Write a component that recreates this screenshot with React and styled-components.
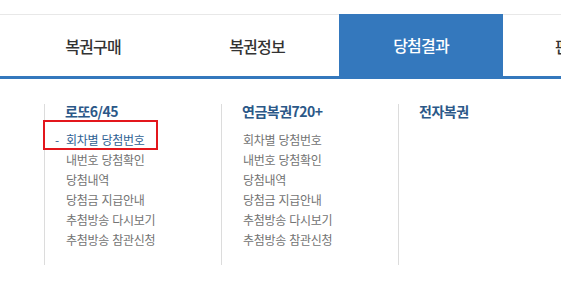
import React from "react";
import styled, { createGlobalStyle } from "styled-components";

const Global = createGlobalStyle`
  html, body { margin: 0; padding: 0; background: #fff; }
  body { font-family: "Noto Sans CJK KR", "Noto Sans", sans-serif; }
  ul { margin: 0; padding: 0; list-style: none; }
`;

const Page = styled.div`
  width: 561px;
  height: 284px;
  overflow: hidden;
  padding-top: 14px;
  box-sizing: border-box;
`;

const Nav = styled.nav`
  display: flex;
  height: 65px;
  border-top: 1px solid #e8e8e8;
  border-bottom: 3px solid #3478bd;
  padding-left: 11px;
  box-sizing: border-box;
`;

const Tab = styled.div`
  flex: 0 0 ${(p) => p.$w || 164}px;
  display: flex;
  align-items: center;
  justify-content: center;
  font-size: 16px;
  letter-spacing: -0.8px;
  font-weight: 500;
  color: ${(p) => (p.$active ? "#fff" : "#333")};
  background: ${(p) => (p.$active ? "#3478bd" : "transparent")};
  margin-top: ${(p) => (p.$active ? "-1px" : "0")};
  white-space: nowrap;
`;

const Sub = styled.div`
  display: flex;
  padding: 25px 0 0 44px;
`;

const Column = styled.div`
  flex: 0 0 177px;
  box-sizing: border-box;
  border-left: 1px solid #dcdcdc;
  padding: 0 0 15px 20px;
`;

const Heading = styled.h3`
  margin: 0 0 12px;
  font-size: 14px;
  line-height: 14px;
  font-weight: 700;
  letter-spacing: -0.5px;
  color: #2b5888;
`;

const List = styled.ul`
  min-height: 120px;
`;

const Item = styled.li`
  position: relative;
  font-size: 12px;
  line-height: 20px;
  letter-spacing: -0.3px;
  word-spacing: 1px;
  padding-left: 1px;
  white-space: nowrap;
  color: ${(p) => (p.$active ? "#2f6193" : "#737373")};
  &::before {
    content: ${(p) => (p.$active ? '"-"' : "none")};
    position: absolute;
    left: -10px;
    top: 0;
  }
`;

const Highlight = styled.span`
  position: absolute;
  left: -22px;
  top: -10px;
  width: 115px;
  height: 30px;
  box-sizing: border-box;
  border: 2px solid #e3161c;
  pointer-events: none;
`;

const items = [
  "회차별 당첨번호",
  "내번호 당첨확인",
  "당첨내역",
  "당첨금 지급안내",
  "추첨방송 다시보기",
  "추첨방송 참관신청",
];

const columns = [
  { title: "로또6/45", items, active: 0 },
  { title: "연금복권720+", items, active: -1 },
  { title: "전자복권", items: [], active: -1 },
];

export default function App() {
  return (
    <Page>
      <Global />
      <Nav>
        <Tab>복권구매</Tab>
        <Tab>복권정보</Tab>
        <Tab $active>당첨결과</Tab>
        <Tab $w={146}>판매점</Tab>
      </Nav>
      <Sub>
        {columns.map((c) => (
          <Column key={c.title}>
            <Heading>{c.title}</Heading>
            <List>
              {c.items.map((it, i) => (
                <Item key={it} $active={i === c.active}>
                  {it}
                  {i === c.active && <Highlight />}
                </Item>
              ))}
            </List>
          </Column>
        ))}
      </Sub>
    </Page>
  );
}
